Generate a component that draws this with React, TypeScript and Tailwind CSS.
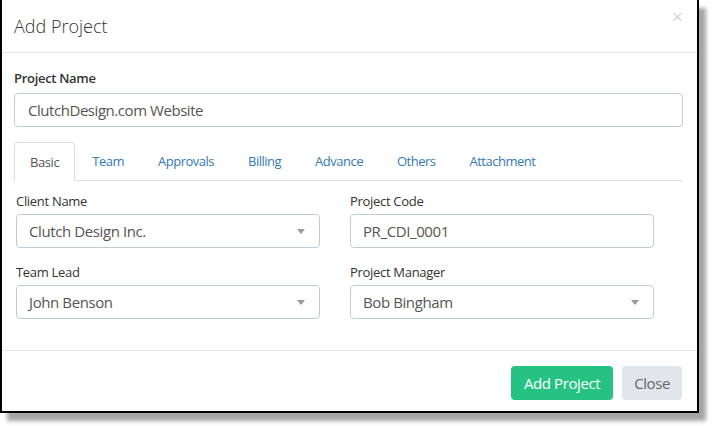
const tabs = ['Basic', 'Team', 'Approvals', 'Billing', 'Advance', 'Others', 'Attachment'];

function Caret() {
  return (
    <svg width="8" height="5" viewBox="0 0 8 5" className="shrink-0">
      <path d="M0 0h8L4 5z" fill="#999" />
    </svg>
  );
}

function Select({ value }: { value: string }) {
  return (
    <div className="flex h-[34px] w-[304px] items-center justify-between rounded-[4px] border border-[#c2cad8] px-[12px] text-[15px] tracking-[-0.4px] text-[#555]">
      <span>{value}</span>
      <span className="pr-[2px]"><Caret /></span>
    </div>
  );
}

function Field({ label, children }: { label: string; children: React.ReactNode }) {
  return (
    <div className="flex flex-col">
      <label className="mb-[4px] text-[13px] leading-[18px] tracking-[-0.3px] text-[#333]">{label}</label>
      {children}
    </div>
  );
}

export default function App() {
  return (
    <div className="h-[427px] w-[712px] bg-white" style={{ fontFamily: '"Open Sans", "Liberation Sans", sans-serif' }}>
      <div className="relative h-[413px] w-[699px] border-x-2 border-b-2 border-black bg-white shadow-[7px_8px_4px_rgba(0,0,0,0.35)]">
        {/* header */}
        <div className="flex h-[53px] items-center border-b border-[#e5e5e5] px-[12px]">
          <h2 className="text-[18px] font-light text-[#333]">Add Project</h2>
          <button className="absolute right-[14px] top-[7px] text-[20px] font-light leading-none text-[#c4c4c4]">×</button>
        </div>

        {/* body */}
        <div className="px-[12px] pt-[16px]">
          <label className="block text-[13px] font-semibold leading-[18px] tracking-[-0.3px] text-[#333]">Project Name</label>
          <div className="mt-[6px] flex h-[34px] w-[669px] items-center rounded-[4px] border border-[#c2cad8] px-[13px] text-[15px] tracking-[-0.45px] text-[#555]">
            ClutchDesign.com Website
          </div>

          <div className="mt-[15px] flex h-[39px] w-[669px] items-end border-b border-[#ddd]">
            {tabs.map((t, i) =>
              i === 0 ? (
                <div key={t} className="-mb-px flex h-[39px] items-center rounded-t-[4px] border border-[#ddd] border-b-white bg-white px-[15px] pt-[2px] text-[13px] tracking-[-0.4px] text-[#555]">
                  {t}
                </div>
              ) : (
                <div key={t} className="flex h-[38px] items-center px-[17px] pt-[2px] text-[13px] tracking-[-0.5px] text-[#337ab7]">
                  {t}
                </div>
              )
            )}
          </div>

          <div className="mt-[11px] grid w-[640px] grid-cols-2 gap-x-[30px] gap-y-[15px] pl-[2px]">
            <Field label="Client Name"><Select value="Clutch Design Inc." /></Field>
            <Field label="Project Code">
              <div className="flex h-[34px] w-[304px] items-center rounded-[4px] border border-[#c2cad8] px-[12px] text-[15px] tracking-[-0.4px] text-[#555]">PR_CDI_0001</div>
            </Field>
            <Field label="Team Lead"><Select value="John Benson" /></Field>
            <Field label="Project Manager"><Select value="Bob Bingham" /></Field>
          </div>
        </div>

        {/* footer */}
        <div className="mt-[31px] flex justify-end gap-[9px] border-t border-[#e5e5e5] px-[15px] pt-[15px]">
          <button className="h-[34px] rounded-[4px] bg-[#26c281] px-[13px] text-[15px] tracking-[-0.4px] text-white">Add Project</button>
          <button className="h-[34px] rounded-[4px] bg-[#e1e5ec] px-[12px] text-[15px] tracking-[-0.4px] text-[#666]">Close</button>
        </div>
      </div>
    </div>
  );
}
